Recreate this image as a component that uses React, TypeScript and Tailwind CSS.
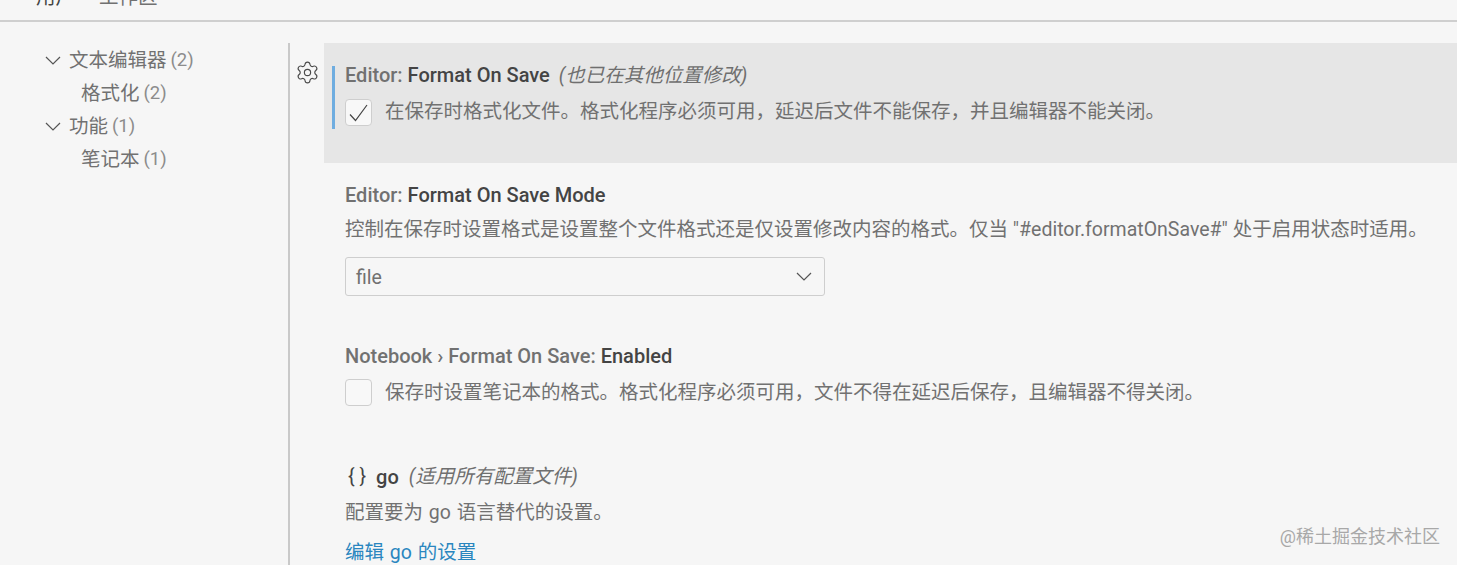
import { Settings } from "lucide-react";

const font = "font-['Roboto','Noto_Sans_CJK_SC',sans-serif]";

const tree = [
  { label: "文本编辑器", count: 2, top: true },
  { label: "格式化", count: 2, top: false },
  { label: "功能", count: 1, top: true },
  { label: "笔记本", count: 1, top: false },
];

function Chevron({ className }: { className?: string }) {
  return (
    <svg width="16" height="9" viewBox="0 0 16 9" fill="none" stroke="currentColor" strokeWidth="1.2" className={className}>
      <path d="M1 1l7 7 7-7" />
    </svg>
  );
}

function Checkbox({ checked }: { checked?: boolean }) {
  return (
    <div className="flex h-[27px] w-[27px] shrink-0 items-center justify-center rounded-[4px] border border-[#cecece] bg-[#f8f8f8]">
      {checked && (
        <svg width="21" height="20" viewBox="0 0 21 20" fill="none" stroke="#444" strokeWidth="1.2">
          <path d="M2 11.5l5.5 6L19 2" />
        </svg>
      )}
    </div>
  );
}

export default function App() {
  return (
    <div className={`${font} relative h-[565px] overflow-hidden bg-[#f6f6f6] text-[19.5px] text-[#717171]`}>
      {/* tabs, cut off by the top of the screenshot */}
      <div className="flex h-[22px] items-start overflow-hidden border-b-2 border-[#cfcfcf]">
        <div className="ml-6 h-[22px] w-[63px] border-b-2 border-[#444] text-center leading-[22px] text-[#444]">
          <span className="relative -top-[13px]">用户</span>
        </div>
        <span className="relative -top-[13px] ml-3 leading-[22px]">工作区</span>
      </div>

      <div className="mt-[21px] flex">
        <aside className="h-[522px] w-[290px] shrink-0 border-r-2 border-[#c9c9c9] pt-[1px]">
          {tree.map((item) => (
            <div key={item.label} className={`flex h-[33px] items-center ${item.top ? "pl-[45px]" : "pl-[81px]"}`}>
              {item.top && <Chevron className="mr-2 text-[#555]" />}
              <span>{item.label}</span>
              <span className="ml-[4px] text-[18.5px] text-[#8c8c8c]">({item.count})</span>
            </div>
          ))}
        </aside>

        <main className="min-w-0 flex-1">
          <section className="flex h-[120px]">
            <div className="flex w-[34px] shrink-0 justify-center pt-[17px]">
              <Settings size={25} strokeWidth={1.1} className="text-[#4a4a4a]" />
            </div>
            <div className="flex-1 bg-[#e6e6e6] pl-2 pt-[23px]">
              <div className="h-[63px] border-l-[3px] border-[#6fade0] pl-[10px]">
                <div className="h-[32px] -translate-y-[1px] whitespace-nowrap font-medium leading-[20px]">
                  <span className="text-[20px]">
                    Editor: <span className="text-[#444]">Format On Save</span>
                  </span>
                  <span className="ml-[9px] font-normal italic text-[#6f6f6f]">(也已在其他位置修改)</span>
                </div>
                <div className="flex items-center gap-[13px]">
                  <Checkbox checked />
                  <span className="-translate-y-[1px] whitespace-nowrap">在保存时格式化文件。格式化程序必须可用，延迟后文件不能保存，并且编辑器不能关闭。</span>
                </div>
              </div>
            </div>
          </section>

          <section className="h-[161px] pl-[55px] pt-[21px]">
            <div className="text-[20px] font-medium leading-[22px]">
              Editor: <span className="text-[#444]">Format On Save Mode</span>
            </div>
            <p className="mt-[13px] whitespace-nowrap leading-[22px]">
              控制在保存时设置格式是设置整个文件格式还是仅设置修改内容的格式。仅当 "#editor.formatOnSave#" 处于启用状态时适用。
            </p>
            <div className="mt-[16px] flex h-[39px] w-[480px] items-center justify-between rounded-[3px] border border-[#cecece] pl-[10px] pr-[12px]">
              <span className="translate-y-[1px]">file</span>
              <Chevron className="text-[#555]" />
            </div>
          </section>

          <section className="h-[120px] pl-[55px] pt-[21px]">
            <div className="text-[20px] font-medium leading-[22px]">
              Notebook › Format On Save: <span className="text-[#444]">Enabled</span>
            </div>
            <div className="mt-[11px] flex items-center gap-[13px]">
              <Checkbox />
              <span className="whitespace-nowrap">保存时设置笔记本的格式。格式化程序必须可用，文件不得在延迟后保存，且编辑器不得关闭。</span>
            </div>
          </section>

          <section className="pl-[55px] pt-[22px]">
            <div className="flex items-center font-medium leading-[22px] text-[#444]">
              <span className="ml-[3px] mr-[10px] font-normal">{"{ }"}</span>
              <span className="text-[20px]">go</span>
              <span className="ml-[10px] font-normal italic text-[#6f6f6f]">(适用所有配置文件)</span>
            </div>
            <p className="mt-[14px] leading-[22px] [word-spacing:1px]">配置要为 go 语言替代的设置。</p>
            <a className="mt-[18px] block leading-[22px] text-[#2a86bf] [word-spacing:1px]">编辑 go 的设置</a>
          </section>
        </main>
      </div>

      <div className="absolute bottom-[17px] right-[17px] text-[18px] leading-[22px] text-[#a8a8a8]">@稀土掘金技术社区</div>
    </div>
  );
}
